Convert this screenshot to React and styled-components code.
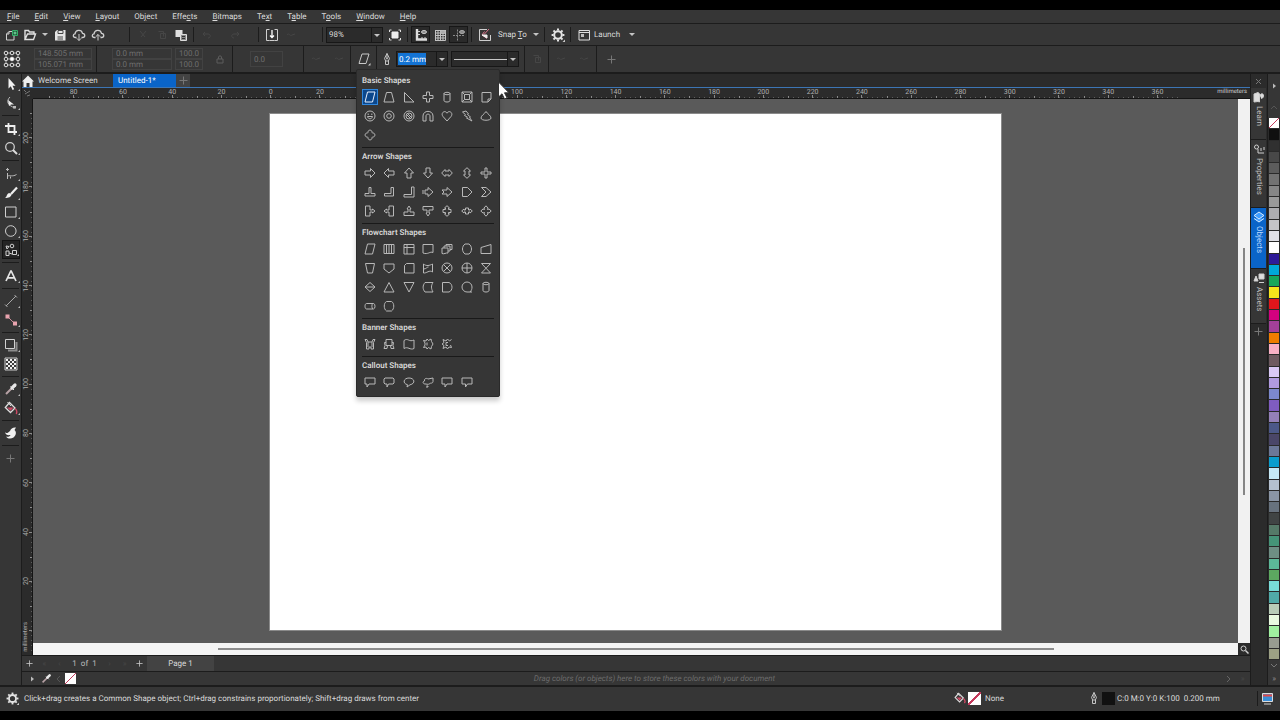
import React from "react";
import styled, { createGlobalStyle, css } from "styled-components";

const c = {
  bar: "#363636",
  dark: "#2b2b2b",
  line: "#1c1c1c",
  text: "#dadada",
  dim: "#6e6e6e",
  faint: "#464646",
  blue: "#0a64c8",
};

const Global = createGlobalStyle`
  * { box-sizing: border-box; }
  html, body { margin: 0; background: #000; }
  body, button, input, select {
    font-family: Roboto, "Open Sans", sans-serif;
    font-size: 8px;
    line-height: 11px;
    color: ${c.text};
    text-rendering: geometricPrecision;
  }
  button, input, select { margin: 0; padding: 0; border: 0; background: none; border-radius: 0; outline: 0; }
  a { color: inherit; text-decoration: none; }
`;

const Window = styled.div`
  min-height: 100vh;
  padding: 10px 0 9px;
  display: flex;
  flex-direction: column;
  background: #000;
  position: relative;
`;

/* ---------- icons ---------- */
const Svg = styled.svg`
  width: ${(p) => p.$size}px;
  height: ${(p) => p.$size}px;
  flex: none;
  display: block;
  fill: none;
  stroke: ${(p) => p.$color || "#cfcfcf"};
  stroke-width: 1;
`;
const Icon = ({ size = 14, color, box, children }) => (
  <Svg $size={size} $color={color} viewBox={`0 0 ${box || size} ${box || size}`} aria-hidden="true">
    {children}
  </Svg>
);
const Gear = ({ size = 14 }) => (
  <Icon size={size} box={14}>
    <circle cx="7" cy="7" r="3.8" strokeWidth="2" stroke="#e4e4e4" />
    {[0, 45, 90, 135, 180, 225, 270, 315].map((a) => (
      <path key={a} d="M7 .6v2" strokeWidth="2" stroke="#e4e4e4" transform={`rotate(${a} 7 7)`} />
    ))}
    <path d="M14 11.5V14h-2.5z" fill="#ccc" stroke="none" />
  </Icon>
);
const Plus = ({ color = "#777", size = 9 }) => (
  <Icon size={size} box={9} color={color}><path d="M4.5 .5v8M.5 4.5h8" /></Icon>
);
const Pen = () => (
  <Icon size={12} color="#c4c4c4">
    <path d="M6 .5L3.5 5.5l1.2 2.5h2.600L8.5 5.5zM6 .5v5M4.5 8v3.500h3V8" />
    <circle cx="6" cy="5.5" r=".6" />
  </Icon>
);
const Bucket = ({ size = 14 }) => (
  <Icon size={size} box={14}>
    <path d="M5.5 1.5L11 7l-4.5 4.500L1.300 6.500z" stroke="#dedede" strokeWidth="1.300" />
    <path d="M3 6.500h6.500L6.500 9.800z" fill="#d14a66" stroke="none" />
    <path d="M3.500 1l3.500 4" stroke="#dedede" />
    <path d="M11 7.500c1.800 1.500 2.200 4 1.200 5.500" stroke="#d14a66" strokeWidth="1.500" />
  </Icon>
);
const Dropper = ({ size = 14 }) => (
  <Icon size={size} box={14}>
    <path d="M2 12L8 6" stroke="#b8a2a6" strokeWidth="2" />
    <path d="M8 6l3-3" stroke="#e8e8e8" strokeWidth="3.200" strokeLinecap="round" />
    <path d="M6.5 4.500l3.500 3.500" stroke="#e8e8e8" />
  </Icon>
);
const Caret = styled.span`
  width: 0;
  height: 0;
  border: 3px solid transparent;
  border-top-color: #c4c4c4;
  border-bottom: 0;
  flex: none;
`;

/* ---------- menu ---------- */
const MenuBar = styled.nav`
  height: 14px;
  padding-left: 7px;
  display: flex;
  align-items: center;
  gap: 15px;
  background: ${c.bar};
  border-bottom: 1px solid ${c.line};
  u { text-decoration-thickness: 1px; text-underline-offset: 1px; }
`;
const MenuLink = styled.a`
  color: #dcdcdc;
`;
const menus = [
  ["", "F", "ile"], ["", "E", "dit"], ["", "V", "iew"], ["", "L", "ayout"], ["Ob", "j", "ect"],
  ["Effe", "c", "ts"], ["", "B", "itmaps"], ["Te", "x", "t"], ["T", "a", "ble"], ["T", "o", "ols"],
  ["", "W", "indow"], ["", "H", "elp"],
];

/* ---------- standard toolbar ---------- */
const Toolbar = styled.div`
  height: 22px;
  padding-left: 1px;
  display: flex;
  align-items: center;
  background: ${c.bar};
  border-bottom: 1px solid ${c.line};
`;
const ToolButton = styled.button`
  width: ${(p) => p.$w || 19}px;
  height: 17px;
  flex: none;
  display: flex;
  align-items: center;
  justify-content: center;
  ${(p) => p.$on && css`background: #2a2a2a; border: 1px solid #171717;`}
`;
const Sep = styled.span`
  width: 1px;
  height: 15px;
  margin: 0 3px;
  flex: none;
  background: ${c.line};
`;
const Select = styled.select`
  appearance: none;
  height: 16px;
  background: ${c.dark};
  border: 1px solid #171717;
`;
const SelectBox = styled.span`
  position: relative;
  display: flex;
  flex: none;
  width: ${(p) => p.$w}px;
  margin: ${(p) => p.$m || "0"};
  ${Select} { width: 100%; padding-left: 2px; }
  ${Caret} { position: absolute; right: 3px; top: 7px; pointer-events: none; }
  &::after { content: ""; position: absolute; right: 11px; top: 1px; bottom: 1px; width: 1px; background: #171717; }
`;
const StyleSelect = styled(Select)`
  background: linear-gradient(#c8c8c8, #c8c8c8) 2px center / 53px 1px no-repeat ${c.dark};
`;
const TextButton = styled.button`
  width: ${(p) => p.$w}px;
  flex: none;
  display: flex;
  align-items: center;
  justify-content: space-between;
  padding: 0 2px 0 ${(p) => p.$l}px;
  white-space: nowrap;
`;

const Faint = ({ kind }) => (
  <Icon size={12} color={c.faint}>
    {kind === "cut" && <path d="M3 2l5 6M9 2L4 8" />}
    {kind === "copy" && <path d="M2.500 2.500h5v5M4.500 4.500h5v5h-5z" />}
    {kind === "undo" && <path d="M2 5l2-2M2 5l2 2M2 5h5c3 0 3 4 0 4" />}
    {kind === "redo" && <path d="M10 5L8 3M10 5L8 7M10 5H5c-3 0-3 4 0 4" />}
    {kind === "dash" && <path d="M2 6c2-3 3 2 5 0l3-1" />}
  </Icon>
);

const Standard = () => (
  <Toolbar role="toolbar" aria-label="Standard">
    <ToolButton aria-label="New">
      <Icon><path d="M8 3.500H5L2.500 6v6h7.500V7" /><path d="M5 3.500V6H2.500" /><path d="M8.500 2.500h5v5h-5z" stroke="#35b06a" fill="#1c5c39" /><path d="M11 3.500v3M9.500 5h3" stroke="#7fe0a8" /></Icon>
    </ToolButton>
    <ToolButton aria-label="Open">
      <Icon><path d="M2 11.500V2.500h3.500l1 1.500h4.500v2M2 11.500l2.500-5.500h8l-2 5.500z" strokeWidth="1.400" stroke="#e0e0e0" /></Icon>
    </ToolButton>
    <ToolButton $w={11} aria-label="Recent files"><Caret /></ToolButton>
    <ToolButton aria-label="Save">
      <Icon><path d="M2 4l2-2h8.500v10.500H2z" fill="#e4e4e4" stroke="none" /><path d="M5 2.500h5v3H5z" fill="#e4e4e4" stroke="#444" /><path d="M4.500 9h5.500M4.500 11h5.500" stroke="#444" /></Icon>
    </ToolButton>
    <ToolButton aria-label="Open from cloud">
      <Icon><path d="M4.500 9.500H3.500C.5 9.500.8 6 3 5.800 3.500 1.500 9.500 1 10.500 5.300 13.500 5.500 13.500 9.500 10.500 9.500h-1" strokeWidth="1.300" /><path d="M7 6v6.500M4.800 10.300L7 12.500l2.200-2.200" /></Icon>
    </ToolButton>
    <ToolButton aria-label="Save to cloud">
      <Icon><path d="M4.500 9.500H3.500C.5 9.500.8 6 3 5.800 3.500 1.500 9.500 1 10.500 5.300 13.500 5.500 13.500 9.500 10.500 9.500h-1" strokeWidth="1.300" /><path d="M7 12.500V6.500M4.800 8.700L7 6.500l2.200 2.200" /></Icon>
    </ToolButton>
    <ToolButton disabled aria-label="Print"><Faint /></ToolButton>
    <Sep />
    <ToolButton disabled aria-label="Cut"><Faint kind="cut" /></ToolButton>
    <ToolButton disabled aria-label="Copy"><Faint kind="copy" /></ToolButton>
    <ToolButton aria-label="Paste">
      <Icon><path d="M1.500 2h7v7h-7z" fill="#e0e0e0" stroke="none" /><path d="M6.500 6.500h6v6h-6z" fill="#8a8a8a" stroke="#ddd" /><path d="M8 8.500h3M8 10.500h3" stroke="#333" /></Icon>
    </ToolButton>
    <Sep />
    <ToolButton disabled aria-label="Undo"><Faint kind="undo" /></ToolButton>
    <ToolButton $w={9} disabled aria-label="Undo list"><Faint /></ToolButton>
    <ToolButton disabled aria-label="Redo"><Faint kind="redo" /></ToolButton>
    <ToolButton $w={11} disabled aria-label="Redo list"><Faint /></ToolButton>
    <Sep />
    <ToolButton aria-label="Import">
      <Icon><path d="M4.500 1.500h-3v11h3M9.500 1.500h3v11h-3M4.500 12.500h5" /><path d="M7 2v7.500M5 7.500l2 2 2-2" stroke="#fff" strokeWidth="1.300" /></Icon>
    </ToolButton>
    <ToolButton disabled aria-label="Export"><Faint kind="dash" /></ToolButton>
    <ToolButton disabled aria-label="Publish"><Faint /></ToolButton>
    <Sep />
    <SelectBox $w={57} $m="0 2px 0 0">
      <Select aria-label="Zoom level" defaultValue="98%"><option>98%</option></Select>
      <Caret />
    </SelectBox>
    <ToolButton aria-label="Full screen preview">
      <Icon><path d="M4 4h6v6H4z" fill="#eee" stroke="#eee" /><path d="M1.500 4V2h2M10.500 2h2v2M12.500 10v2h-2M3.500 12h-2v-2" stroke="#ddd" /></Icon>
    </ToolButton>
    <Sep />
    <ToolButton $on aria-label="Show rulers">
      <Icon><path d="M3 1v10.500H13" strokeWidth="2.400" stroke="#ddd" /><path d="M4 3.500h2M4 6.500h2M8 11V9M11 11V9" /><ellipse cx="10" cy="4" rx="2.500" ry="1.500" fill="#888" /></Icon>
    </ToolButton>
    <ToolButton aria-label="Show grid">
      <Icon><path d="M2 2.500h10.500M2 5h10.500M2 7.500h10.500M2 10h10.500M2 12.500h10.500M2.500 2v10.500M5 2v10.500M7.500 2v10.500M10 2v10.500M12.500 2v10.500" stroke="#c2c2c2" /><ellipse cx="10" cy="4" rx="2.500" ry="1.500" fill="#aaa" stroke="#bbb" /></Icon>
    </ToolButton>
    <ToolButton $on aria-label="Show guidelines">
      <Icon color="#8a8a8a"><path d="M5.500 1.500v11M1 7.500h12" strokeDasharray="2 1" /><ellipse cx="10" cy="4" rx="2.500" ry="1.500" fill="#888" stroke="#aaa" /></Icon>
    </ToolButton>
    <Sep />
    <ToolButton aria-label="Snap off">
      <Icon><path d="M12.500 7v5.500H1.500v-11H9" /><path d="M11 1L6 6.500M6.500 3.500L4 7l5 3.500" stroke="#d9738a" /><path d="M4 7h5v3z" fill="#eee" stroke="#eee" /></Icon>
    </ToolButton>
    <TextButton $w={47} $l={4}><span>Snap <u>T</u>o</span><Caret /></TextButton>
    <Sep />
    <ToolButton aria-label="Options"><Gear /></ToolButton>
    <Sep />
    <ToolButton aria-label="Application launcher">
      <Icon><path d="M2 2.500h10.500v9.500H2zM2 4.500h10.500" stroke="#ddd" /><path d="M4 6h3v3H4z" fill="#bbb" stroke="none" /></Icon>
    </ToolButton>
    <TextButton $w={44} $l={1}><span>Launch</span><Caret /></TextButton>
  </Toolbar>
);

/* ---------- property bar ---------- */
const PropertyBar = styled.div`
  height: 28px;
  padding-left: 3px;
  display: flex;
  align-items: center;
  background: ${c.bar};
  border-bottom: 2px solid ${c.line};
`;
const TallSep = styled(Sep)`
  height: 26px;
  margin: 0;
`;
const Stack = styled.div`
  display: flex;
  flex-direction: column;
  margin: 0 ${(p) => p.$r || 3}px 0 ${(p) => p.$l || 0}px;
`;
const Field = styled.input`
  width: ${(p) => p.$w}px;
  height: 11px;
  padding: 0 3px;
  color: ${c.dim};
  border: 1px solid #424242;
  ${(p) => p.$tall && css`height: 16px;`}
`;
const Slot = styled.span`
  width: ${(p) => p.$w}px;
  flex: none;
  display: flex;
  align-items: center;
  justify-content: center;
`;
const PickerAnchor = styled.div`
  position: relative;
  width: 25px;
  display: flex;
  justify-content: center;
`;
const Combo = styled.div`
  width: 52px;
  height: 16px;
  flex: none;
  display: flex;
  align-items: center;
  justify-content: space-between;
  padding-left: 1px;
  background: ${c.dark};
  border: 1px solid #171717;
  input { width: 28px; height: 12px; padding-left: 1px; background: #1373d4; color: #fff; }
  button { width: 11px; height: 14px; display: flex; align-items: center; justify-content: center; border-left: 1px solid #171717; }
`;

/* ---------- shape picker ---------- */
const Popup = styled.div`
  position: absolute;
  z-index: 5;
  left: 5px;
  top: 18px;
  width: 144px;
  padding: 2px 3px;
  background: ${c.bar};
  border: 1px solid #2a2a2a;
  border-radius: 2px;
  box-shadow: 0 4px 5px rgba(0, 0, 0, 0.2);
`;
const Group = styled.section`
  padding-bottom: 2px;
  & + &::before { content: ""; display: block; height: 1px; margin: 0 2px; background: #191919; }
`;
const GroupTitle = styled.h2`
  margin: 0;
  padding-left: 2px;
  height: 16px;
  font-size: 8px;
  line-height: 17px;
  font-weight: 600;
  color: #d8d8d8;
`;
const ShapeGrid = styled.div`
  display: grid;
  grid-template-columns: repeat(7, 1fr);
  grid-auto-rows: 19px;
  place-items: center;
`;
const ShapeButton = styled.button`
  width: 16px;
  height: 16px;
  display: flex;
  align-items: center;
  justify-content: center;
  ${(p) => p.$on && css`background: #0b478c; outline: 1px solid #2f86dc; outline-offset: -1px;`}
`;

const groups = [
  ["Basic Shapes", [
    ["Parallelogram", "M3.500 1h7.500l-2.500 10H1z"],
    ["Trapezoid", "M3.500 1.500h5L11 11H1z"],
    ["Right triangle", "M1.500 1.500L11 11H1.500z"],
    ["Cross", "M4.500 1h3v3.500H11v3H7.500V11h-3V7.500H1v-3h3.500z"],
    ["Cylinder", "M3 2.500v7c0 2 6 2 6 0v-7M3 2.500c0-1.600 6-1.600 6 0s-6 1.600-6 0"],
    ["Frame", "M1 1h10v10H1zM3.500 3.500h5v5h-5zM1 1l2.500 2.500M11 1L8.500 3.500M1 11l2.500-2.500M11 11L8.500 8.500"],
    ["Folded corner", "M2 1.500h9V8l-3 3H2zM11 8H8v3"],
    ["Smiley", "M11 6A5 5 0 1 1 1 6a5 5 0 0 1 10 0zM3.500 6.500c.5 3 4.500 3 5 0zM3.500 4.200h1.500M7 4.200h1.500"],
    ["Donut", "M11 6A5 5 0 1 1 1 6a5 5 0 0 1 10 0zM8.300 6a2.300 2.300 0 1 1-4.600 0 2.300 2.300 0 0 1 4.600 0z"],
    ["No symbol", "M11 6A5 5 0 1 1 1 6a5 5 0 0 1 10 0zM9 6a3 3 0 1 1-6 0 3 3 0 0 1 6 0zM3 4l5 5M4 3l5 5"],
    ["Arch", "M1 11V6C1-.2 11-.2 11 6v5H8V6C8 3.500 4 3.500 4 6v5z"],
    ["Heart", "M6 11L2 6.500C-.8 3 4-.5 6 3.200 8-.5 12.800 3 10 6.500z"],
    ["Lightning", "M1.500 2L5 1l2.500 3-1 .5L9.500 7l-1 .5L11 11 5.500 8l1-.8L3.500 5.500l1-.8z"],
    ["Teardrop", "M6 1.500C7.500 4 11 5.500 11 8c0 3-10 3-10 0C1 5.500 4.500 4 6 1.500z"],
    ["Plaque", "M4 3C4 .5 8 .5 8 3c0 1 .5 1 1 1 2.500 0 2.500 4 0 4-.5 0-1 0-1 1 0 2.500-4 2.500-4 0 0-1-.5-1-1-1C.5 8 .5 4 3 4c.5 0 1 0 1-1z"],
  ]],
  ["Arrow Shapes", [
    ["Right arrow", "M1 4h5.500V1.500L11 6l-4.500 4.500V8H1z"],
    ["Left arrow", "M11 4H5.500V1.500L1 6l4.500 4.500V8H11z"],
    ["Up arrow", "M4 11V6H1.500L6 1l4.500 5H8v5z"],
    ["Down arrow", "M4 1v5H1.500L6 11l4.500-5H8V1z"],
    ["Left-right arrow", "M.7 6L4 2.500V4h4V2.500L11.300 6 8 9.500V8H4v1.500z"],
    ["Up-down arrow", "M6 .7L9.500 4H8v4h1.500L6 11.300 2.500 8H4V4H2.500z"],
    ["Four-way arrow", "M5 1h2v4h4v2H7v4H5V7H1V5h4z"],
    ["Three-way arrow", "M5 1.500h2v6h4v2.500H1V7.500h4z"],
    ["Bent arrow", "M8 1.500h2.500v8.500H1.500V7.500H8z"],
    ["Corner arrow", "M8.500 1h2.500v10H1V8.500h7.500z"],
    ["Striped arrow", "M1 4v4M3 4h3V1.500L11 6l-5 4.500V8H3z"],
    ["Notched arrow", "M1 4h5V1.500L11 6l-5 4.500V8H1l2-2z"],
    ["Pentagon arrow", "M1.500 1.500h5L11 6l-4.500 4.500h-5z"],
    ["Chevron", "M1.500 1.500h4.500L11 6l-5 4.500H1.500L6 6z"],
    ["Right callout arrow", "M1.500 1H6v4h2.500V4L11 6 8.500 8V7H6v4H1.500z"],
    ["Left callout arrow", "M10.500 1H6v4H3.500V4L1 6l2.500 2V7H6v4h4.500z"],
    ["Up callout arrow", "M1 10.500V7h4V4H4l2-3 2 3H7v3h4v3.500z"],
    ["Down callout arrow", "M1 1.500V5h4v3H4l2 3 2-3H7V5h4V1.500z"],
    ["Up-down callout", "M6 .7L8.500 3H7.500v1.500H10v3H7.500V9h1L6 11.300 3.500 9h1V7.500H2v-3h2.500V3h-1z"],
    ["Left-right callout", "M.7 6L3 4v1h1.500V3h3v2H9V4l2.300 2L9 8V7H7.500v2h-3V7H3v1z"],
    ["Quad callout", "M6 .8L8 3l-.5 1.500L9 4l2.200 2L9 8l-1.500-.5L8 9l-2 2.200L4 9l.5-1.500L3 8 .8 6 3 4l1.500.5L4 3z"],
  ]],
  ["Flowchart Shapes", [
    ["Data", "M3.500 1h7.500l-2.500 10H1z"],
    ["Predefined process", "M1 1.500h10v9H1zM3.500 1.500v9M6 1.500v9M8.500 1.500v9"],
    ["Internal storage", "M1 1.500h10v9.500H1zM4 1.500v9.500M1 4.500h10"],
    ["Document", "M1 1.500h10v8C8 8 6 12 1 10z"],
    ["Multidocument", "M1 5h6v5c-2-.5-4 1.500-6 .5zM3 5V3h6v5H7M5 3V1.500h6V6.500H9"],
    ["Preparation", "M4 1h4c1.500 1 2.500 3 2.500 5S9.500 10 8 11H4C2.500 10 1.500 8 1.500 6S2.500 2 4 1z"],
    ["Manual input", "M1 4.500L11 1.500v9H1z"],
    ["Manual operation", "M1.500 1.500h9L8.500 11h-5z"],
    ["Off-page connector", "M1 2h10v5l-5 4-5-4z"],
    ["Card", "M3.500 1.500H11V11H1.500V3.500z"],
    ["Punched tape", "M1.500 2c3 2.500 6 1.500 9 0v8c-3-2.500-6 1.500-9 1zM1.500 7c3 0 3-2 5-2"],
    ["Summing junction", "M11 6A5 5 0 1 1 1 6a5 5 0 0 1 10 0zM2.500 2.500l7 7M9.500 2.500l-7 7"],
    ["Or", "M11 6A5 5 0 1 1 1 6a5 5 0 0 1 10 0zM6 1v10M1 6h10"],
    ["Collate", "M1.500 1.500h9l-9 9.500h9z"],
    ["Sort", "M6 1.500L11 6l-5 4.500L1 6zM1 6h10"],
    ["Extract", "M6 1.500L11 11H1z"],
    ["Merge", "M1 1.500h10L6 11z"],
    ["Stored data", "M3 1.500h8c-2 3-2 6 0 9.500H3C.5 8 .5 4.500 3 1.500z"],
    ["Delay", "M1.500 1.500H8c4 1.500 4 8 0 9.500H1.500z"],
    ["Sequential access", "M11 11H6A5 5 0 1 1 11 6c0 2-.5 3.500-2 5"],
    ["Magnetic disk", "M3 2.500v7c0 2 6 2 6 0v-7M3 2.500c0-1.600 6-1.600 6 0s-6 1.600-6 0"],
    ["Direct access", "M2.500 3.500h7c2 0 2 5.500 0 5.500h-7c-2 0-2-5.500 0-5.500zM9 3.500c-1.500 0-1.500 5.500 0 5.500"],
    ["Display", "M3.500 1.500h5C11.500 3 11.500 9 8.500 11h-5C.5 9 .5 3 3.500 1.500z"],
  ]],
  ["Banner Shapes", [
    ["Ribbon up", "M1 1.500h2L4 4h4l1-2.500h2L9.500 4.500V11H7V9H5v2H2.500V4.500zM4 4v5M8 4v5"],
    ["Ribbon down", "M3 1.500h6v6H3zM3 4.500H1.500l.5 3-1 3h3l.5-3M9 4.500h1.500l-.5 3 1 3H8l-.5-3"],
    ["Wave", "M1 2.500c4-3 5 2 10-.5v8.500c-4 2-6-2.500-10 0z"],
    ["Star banner", "M1.500 2.500l2.500.5 1-2 1.500 1.500L9 1l.5 2.500L11 6 9.500 8.500 9 11 6.500 9.500 5 11 4 9l-2.500.5L3 7V5zM5 4.500v3"],
    ["Burst banner", "M10.500 1.500L8.500 3 6.500 1 5 3 2 1.500 3 4.500 1 6l2 1.500-1 3 3-1.500L6.500 11 8 9l2.500.5-1-2.500M7 4.500H5v3h2"],
  ]],
  ["Callout Shapes", [
    ["Rectangular callout", "M1 2h10v6H5L3 11V8H1z"],
    ["Rounded callout", "M2 2h8l1 1v4l-1 1H5.500L4 11V8H2L1 7V3z"],
    ["Oval callout", "M4.500 8.700C-.8 7.500.5 2 6 2s7 5.500 1 6.800L4 11z"],
    ["Cloud callout", "M4 8C1 8.500 0 5.500 2.500 5 2 2 5 2 6 3l5-1v3.500C11 6.500 10 7.500 8.500 7 8 8.500 5 8.500 4 8zM4.500 10h1.500v1H4"],
    ["Line callout", "M1 2h10v6H6L4 11V8H1z"],
    ["Bent line callout", "M1 2h10v6H6.500L4.500 11V8H1z"],
  ]],
];

const ShapePicker = () => (
  <Popup role="menu" aria-label="Common shapes">
    {groups.map(([title, shapes]) => (
      <Group key={title}>
        <GroupTitle>{title}</GroupTitle>
        <ShapeGrid>
          {shapes.map(([name, d]) => {
            const on = title === "Basic Shapes" && name === "Parallelogram";
            return (
              <ShapeButton key={name} aria-label={name} $on={on}>
                <Icon size={12} color={on ? "#e6f0ff" : "#b8b8b8"}><path d={d} /></Icon>
              </ShapeButton>
            );
          })}
        </ShapeGrid>
      </Group>
    ))}
  </Popup>
);

const Properties = () => (
  <PropertyBar role="toolbar" aria-label="Property bar">
    <Icon size={18}>
      <path d="M4 3h10M4 9h3M11 9h3M4 15h10M3 4v10M15 4v10" stroke="#999" />
      {[3, 9, 15].map((x) => [3, 9, 15].map((y) => (
        <circle key={x + "-" + y} cx={x} cy={y} r="1.800" fill={x === 9 && y === 9 ? "#fff" : c.bar} stroke="#e4e4e4" />
      )))}
    </Icon>
    <Stack $l={13} $r={4}>
      <Field $w={58} disabled aria-label="X position" defaultValue="148.505 mm" />
      <Field $w={58} disabled aria-label="Y position" defaultValue="105.071 mm" />
    </Stack>
    <TallSep />
    <Stack $l={15}>
      <Field $w={60} disabled aria-label="Width" defaultValue="0.0 mm" />
      <Field $w={60} disabled aria-label="Height" defaultValue="0.0 mm" />
    </Stack>
    <Stack $r={5}>
      <Field $w={28} disabled aria-label="Scale X" defaultValue="100.0" />
      <Field $w={28} disabled aria-label="Scale Y" defaultValue="100.0" />
    </Stack>
    <Slot $w={24}><Icon size={10} color="#5c5c5c"><path d="M2 5h6v4H2zM3.500 5V3c0-1.500 3-1.500 3 0v2" /></Icon></Slot>
    <TallSep />
    <Stack $l={17} $r={20}><Field $tall $w={33} disabled aria-label="Rotation" defaultValue="0.0" /></Stack>
    <TallSep />
    <Slot $w={23}><Faint kind="dash" /></Slot>
    <Slot $w={23}><Faint kind="dash" /></Slot>
    <TallSep />
    <PickerAnchor>
      <ToolButton aria-label="Common shapes" aria-expanded="true">
        <Icon><path d="M5 2h7l-3 9.500H2z" stroke="#c8c8c8" /><path d="M13.500 11v2.500H11z" fill="#ccc" stroke="none" /></Icon>
      </ToolButton>
      <ShapePicker />
    </PickerAnchor>
    <TallSep />
    <Slot $w={19}><Pen /></Slot>
    <Combo>
      <input aria-label="Outline width" defaultValue="0.2 mm" />
      <button aria-label="Outline width list"><Caret /></button>
    </Combo>
    <SelectBox $w={68} $m="0 5px 0 3px">
      <StyleSelect aria-label="Line style"><option value="solid" aria-label="Solid" /></StyleSelect>
      <Caret />
    </SelectBox>
    <TallSep />
    <Slot $w={23}><Faint kind="copy" /></Slot>
    <TallSep />
    <Slot $w={23}><Faint kind="dash" /></Slot>
    <Slot $w={24}><Faint kind="dash" /></Slot>
    <TallSep />
    <ToolButton $w={29} aria-label="Add tool"><Plus /></ToolButton>
  </PropertyBar>
);

/* ---------- body ---------- */
const Body = styled.div`
  flex: 1;
  display: flex;
  background: ${c.bar};
`;
const Toolbox = styled.div`
  width: 22px;
  flex: none;
  display: flex;
  flex-direction: column;
  align-items: center;
  border-right: 1px solid ${c.line};
`;
const ToolItem = styled.button`
  position: relative;
  width: 18px;
  height: 19px;
  display: flex;
  align-items: center;
  justify-content: center;
  ${(p) => p.$on && css`background: #242424; border: 1px solid #141414;`}
  ${(p) => p.$more && css`
    &::after { content: ""; position: absolute; right: 0; bottom: 2px; border: 1px solid #bbb; border-top-color: transparent; border-left-color: transparent; }
  `}
`;
const ToolRule = styled.hr`
  width: 17px;
  height: 1px;
  margin: 3px 0 ${(p) => (p.$tight ? 2 : 3)}px;
  border: 0;
  flex: none;
  background: ${c.line};
`;
const tools = [
  ["Pick", <path d="M4.500 1v10.500l2.300-2.200 1.700 3.700 1.700-.8-1.700-3.500h3z" fill="#f2f2f2" stroke="none" />, 1],
  ["Shape", <><path d="M6 1C2 5 3 9 11 12" stroke="#bbb" /><path d="M4 4l1 6 2-1.500h3z" fill="#eee" stroke="none" /><path d="M9 10h3v2.500H9z" fill="#bbb" stroke="none" /></>, 1],
  "rule",
  ["Crop", <path d="M4.500 1v9H13M1 4h9.500v9" strokeWidth="1.800" stroke="#eee" />, 1],
  ["Zoom", <><circle cx="6" cy="6" r="4.300" stroke="#ccc" strokeWidth="1.300" /><path d="M9 9l4 4" strokeWidth="2" stroke="#ddd" /></>, 1],
  "rule",
  ["Freehand", <path d="M3.500 1v3M2 2.500h3M3.500 6v6M3.500 9c3-1 5 1 9-1.500M6.500 9.500v2" stroke="#bbb" />, 1],
  ["Artistic media", <><path d="M13 1.500L7 8" strokeWidth="2.200" stroke="#eee" /><path d="M7.500 8c0 3-3 4-6.500 4 2-1 1.500-4 4-5z" fill="#eee" stroke="none" /></>, 1],
  ["Rectangle", <path d="M1.500 2h10.500v10H1.500z" />, 1],
  ["Ellipse", <circle cx="6.800" cy="7" r="5.300" />, 1],
  ["Common shapes", <><circle cx="8" cy="3" r="1.800" /><path d="M2 3l3 .5-2 2.500zM2 8h3v4.500H2zM8.500 7.500h4v4h-4z" /><path d="M5 10l3 1" /></>, 1, 1],
  "rule",
  ["Text", <path d="M2 12L6.800 2h.4L12 12M3.800 8.800h6.400" strokeWidth="1.700" stroke="#e6e6e6" />, 1],
  "tight",
  ["Dimension", <path d="M2 12L12 2M1 10.500l2.500 2.500M10.500 1l2.500 2.500" stroke="#a8a8a8" />, 1],
  ["Connector", <><path d="M3 3l8 8" stroke="#c98d98" /><path d="M1.500 1.500h4v4h-4zM9 8.500h4v4H9z" fill="#e8a3ae" stroke="none" /></>, 1],
  "tight",
  ["Drop shadow", <><path d="M4 12.500h8.500V4" strokeWidth="2" stroke="#8c8c8c" /><path d="M1.500 1.500h9v9h-9z" fill="#363636" stroke="#d0d0d0" /></>, 1],
  ["Transparency", <><path d="M1 1h12v12H1z" fill="#3a3a3a" stroke="#ccc" />{[0, 1, 2, 3, 4].map((r) => [0, 1, 2, 3, 4].map((k) => (r + k) % 2 === 0 && <rect key={r + "-" + k} x={2 + k * 2} y={2 + r * 2} width="2" height="2" fill="#f0f0f0" stroke="none" />))}</>],
  "tight",
  ["Color eyedropper", "dropper", 1],
  ["Interactive fill", "bucket", 1],
  "tight",
  ["Smart tool", <path d="M1 6c1 2 3 1 5-1 1-2.500 3-4 6-3.500L10.500 4c2 1.500 2 5-1 7.500-3 2-6.500 1-7.500-1 2 .8 4 0 4.500-1.500C4 9.500 1.500 9 1 6z" fill="#f0f0f0" stroke="none" />],
  "rule",
];
const Tools = () => (
  <Toolbox role="toolbar" aria-label="Toolbox">
    {tools.map((t, i) =>
      typeof t === "string" ? <ToolRule key={i} $tight={t === "tight"} /> : (
        <ToolItem key={t[0]} aria-label={t[0]} $more={t[2]} $on={t[3]}>
          {t[1] === "dropper" ? <Dropper /> : t[1] === "bucket" ? <Bucket /> : <Icon>{t[1]}</Icon>}
        </ToolItem>
      )
    )}
    <ToolItem aria-label="Customize toolbox"><Plus /></ToolItem>
  </Toolbox>
);

const Center = styled.div`
  flex: 1;
  min-width: 0;
  display: flex;
  flex-direction: column;
`;
const Tabs = styled.div`
  height: 14px;
  display: flex;
  background: ${c.dark};
  border-bottom: 1px solid #3c75b4;
`;
const Tab = styled.button`
  display: flex;
  align-items: center;
  justify-content: ${(p) => (p.$l === undefined ? "center" : "flex-start")};
  width: ${(p) => p.$w}px;
  padding-left: ${(p) => p.$l || 0}px;
  background: ${(p) => (p.$on ? c.blue : p.$light ? "#434343" : c.bar)};
  color: ${(p) => (p.$on ? "#fff" : c.text)};
  gap: 4px;
  white-space: nowrap;
`;
const Editor = styled.div`
  flex: 1;
  display: grid;
  grid-template-columns: 11px 1fr 12px;
  grid-template-rows: 11px 1fr 12px;
`;
const tick = "#8a8a8a";
const RulerTop = styled.div`
  grid-column: 2 / 4;
  display: flex;
  padding-left: 16px;
  background: ${c.dark};
  border-bottom: 1px solid #151515;
`;
const RulerCorner = styled.div`
  background: ${c.dark};
  display: flex;
  align-items: center;
  justify-content: center;
`;
const MarkX = styled.span`
  flex: 1;
  text-align: center;
  font-size: 7px;
  line-height: 8px;
  color: #b0b0b0;
  background:
    linear-gradient(${tick}, ${tick}) center bottom / 1px 3px no-repeat,
    linear-gradient(${tick}, ${tick}) left bottom / 1px 2px no-repeat,
    repeating-linear-gradient(to right, #5e5e5e 0 1px, transparent 1px 10%) left bottom / 100% 1px no-repeat;
`;
const UnitX = styled.span`
  width: 68px;
  padding-right: 3px;
  text-align: right;
  font-size: 6px;
  line-height: 8px;
  color: #d0d0d0;
`;
const RulerLeft = styled.div`
  grid-row: 2 / 4;
  display: flex;
  flex-direction: column;
  padding-top: 14px;
  background: ${c.dark};
  border-right: 1px solid #151515;
`;
const MarkY = styled.span`
  flex: 1;
  display: flex;
  align-items: center;
  justify-content: flex-start;
  font-size: 7px;
  line-height: 8px;
  color: #b0b0b0;
  background:
    linear-gradient(${tick}, ${tick}) right center / 3px 1px no-repeat,
    linear-gradient(${tick}, ${tick}) right top / 2px 1px no-repeat,
    repeating-linear-gradient(to bottom, #5e5e5e 0 1px, transparent 1px 10%) right top / 1px 100% no-repeat;
  span { writing-mode: vertical-rl; transform: rotate(180deg); }
`;
const UnitY = styled(MarkY)`
  flex: 0 0 49px;
  padding-top: 12px;
  font-size: 6px;
`;
const Workspace = styled.main`
  display: flex;
  justify-content: center;
  padding: 14px 0 12px;
  background: #5a5a5a;
`;
const Sheet = styled.div`
  width: 60.8%;
  background: #fff;
  border: 1px solid #8a8a8a;
`;
const ScrollY = styled.div`
  background: #f1f1f1;
  display: flex;
  flex-direction: column;
  align-items: center;
  &::before { content: ""; flex: 149; }
  &::after { content: ""; flex: 148; }
  span { flex: 247; width: 2px; background: #858585; }
`;
const ScrollX = styled.div`
  background: #f4f4f4;
  display: flex;
  align-items: center;
  &::before { content: ""; flex: 185; }
  &::after { content: ""; flex: 184; }
  span { flex: 836; height: 2px; background: #8c8c8c; }
`;
const Strip = styled.div`
  height: ${(p) => p.$h}px;
  padding-left: ${(p) => p.$l || 0}px;
  display: flex;
  align-items: center;
  border-top: 1px solid ${c.line};
`;
const NavButton = styled.button`
  width: ${(p) => p.$w || 15}px;
  flex: none;
  display: flex;
  justify-content: center;
  color: ${c.faint};
`;
const PageCount = styled.span`
  width: 35px;
  text-align: center;
  color: #bcbcbc;
`;
const PageTab = styled(Tab)`
  height: 15px;
  background: #434343;
`;
const Hint = styled.span`
  flex: 1;
  padding-left: 10px;
  text-align: center;
  font-style: italic;
  color: #6c6c6c;
`;

const Swatch = styled.button`
  display: block;
  width: ${(p) => p.$s}px;
  height: ${(p) => p.$s}px;
  flex: none;
  background: ${(p) => p.$color};
`;
const nocolor = "linear-gradient(135deg, transparent 46%, #c43a5c 46% 54%, transparent 54%), #fff";

const Dockers = styled.div`
  width: 17px;
  flex: none;
  padding-right: 1px;
  display: flex;
  flex-direction: column;
  background: ${c.dark};
  border-left: 1px solid ${c.line};
`;
const DockClose = styled.button`
  height: 14px;
  color: #8a8a8a;
  display: flex;
  align-items: center;
  justify-content: center;
`;
const DockTab = styled.button`
  height: ${(p) => p.$h}px;
  padding-top: 3px;
  display: flex;
  flex-direction: column;
  align-items: center;
  gap: 3px;
  background: ${(p) => (p.$on ? c.blue : c.bar)};
  border-bottom: 1px solid ${c.line};
  color: ${(p) => (p.$on ? "#b8d8ff" : "#bdbdbd")};
  span { writing-mode: vertical-rl; line-height: 12px; }
`;
const PaletteCol = styled.div`
  width: 13px;
  flex: none;
  display: flex;
  flex-direction: column;
  border-left: 1px solid ${c.line};
`;
const PaletteHead = styled.button`
  height: ${(p) => p.$h}px;
  display: flex;
  align-items: center;
  justify-content: center;
  color: #8a8a8a;
`;
const PaletteColor = styled.button`
  flex: 1;
  background: ${(p) => p.$color};
  border: solid #2a2a2a;
  border-width: 0 1px 1px;
`;
const palette = [
  "#101010", "#303030", "#484848", "#5c5c5c", "#727272", "#868686", "#9a9a9a", "#adadb0", "#c4c4c8", "#e0e0e6", "#ffffff",
  "#2e1a98", "#00a8d8", "#16a75a", "#f5e61c", "#e0161c", "#d3017f", "#a24099", "#ee7d00", "#f9b0c5", "#6e5a60",
  "#d9c8f5", "#b09ae0", "#7c88cc", "#7f5cc0", "#9480b8", "#4c5888", "#4a4668", "#6c7898", "#0a9dcd", "#c5e8f5",
  "#b4c0cf", "#8a95a5", "#67727e", "#404444", "#557a68", "#459478", "#6e8e84", "#5cb898", "#5ca860", "#78dcd8",
  "#50aaa8", "#b8ccb8", "#e8fae0", "#a0f0a0", "#989c90", "#9ca084",
];

/* ---------- status ---------- */
const Status = styled.footer`
  height: 26px;
  display: flex;
  align-items: center;
  padding: 0 6px 2px;
  background: ${c.bar};
  border-top: 2px solid ${c.line};
`;
const StatusText = styled.span`
  flex: 1;
  padding-left: 5px;
  white-space: nowrap;
`;
const StatusCell = styled.span`
  width: ${(p) => p.$w}px;
  flex: none;
  display: flex;
  align-items: center;
  gap: 2px;
  white-space: pre;
`;
const Cursor = styled.div`
  position: absolute;
  z-index: 9;
  left: 497px;
  top: 81px;
  pointer-events: none;
`;

const Chevron = ({ d, color = "#777" }) => <Icon size={8} color={color}><path d={d} /></Icon>;
const rangeX = Array.from({ length: 23 }, (_, i) => Math.abs(i * 20 - 80));
const rangeY = Array.from({ length: 10 }, (_, i) => 200 - i * 20);

export default function App() {
  return (
    <Window>
      <Global />
      <MenuBar aria-label="Main menu">
        {menus.map(([a, k, b]) => <MenuLink href="#" key={a + k + b}>{a}<u>{k}</u>{b}</MenuLink>)}
      </MenuBar>
      <Standard />
      <Properties />
      <Body>
        <Tools />
        <Center>
          <Tabs>
            <Tab $w={91} $l={0}>
              <Icon size={12}><path d="M0 6.500L6 .5l6 6h-1.500V12H7.500V8h-3v4H1.500V6.500z" fill="#eee" stroke="none" /></Icon>
              Welcome Screen
            </Tab>
            <Tab $w={63} $l={5} $on>Untitled-1*</Tab>
            <Tab $w={14} $light aria-label="New document"><Plus /></Tab>
          </Tabs>
          <Editor>
            <RulerCorner><Icon size={9} color="#777"><path d="M1 1l2 2M2 5l5-3M4 7l3-1" /></Icon></RulerCorner>
            <RulerTop>
              {rangeX.map((n, i) => <MarkX key={i}>{n}</MarkX>)}
              <UnitX>millimeters</UnitX>
            </RulerTop>
            <RulerLeft>
              {rangeY.map((n) => <MarkY key={n}><span>{n}</span></MarkY>)}
              <UnitY><span>millimeters</span></UnitY>
            </RulerLeft>
            <Workspace><Sheet /></Workspace>
            <ScrollY><span /></ScrollY>
            <ScrollX><span /></ScrollX>
            <RulerCorner><Icon size={10}><circle cx="4.500" cy="4.500" r="2.500" /><path d="M6.500 6.500l3 3" strokeWidth="1.500" /></Icon></RulerCorner>
          </Editor>
          <Strip $h={16}>
            <NavButton aria-label="Add page before"><Plus color="#ccc" size={7} /></NavButton>
            <NavButton disabled aria-label="First page">«</NavButton>
            <NavButton disabled aria-label="Previous page">‹</NavButton>
            <PageCount>1 &nbsp;of &nbsp;1</PageCount>
            <NavButton disabled aria-label="Next page">›</NavButton>
            <NavButton disabled aria-label="Last page">»</NavButton>
            <NavButton aria-label="Add page after"><Plus color="#ccc" size={7} /></NavButton>
            <PageTab $w={67}>Page 1</PageTab>
          </Strip>
          <Strip $h={14} $l={3}>
            <NavButton $w={14} aria-label="Palette menu"><Icon size={8}><path d="M3 1.500L6 4 3 6.500z" fill="#bbb" stroke="none" /></Icon></NavButton>
            <NavButton $w={14} aria-label="Pick color"><Dropper size={11} /></NavButton>
            <NavButton $w={12} disabled aria-label="Scroll left"><Chevron d="M5 1L2 4l3 3" color="#555" /></NavButton>
            <Swatch $s={11} $color={nocolor} aria-label="No color" />
            <Hint>Drag colors (or objects) here to store these colors with your document</Hint>
            <NavButton $w={12} disabled aria-label="Scroll right"><Chevron d="M2 1l3 3-3 3" color="#666" /></NavButton>
            <NavButton disabled aria-label="Expand">»</NavButton>
          </Strip>
        </Center>
        <Dockers>
          <DockClose aria-label="Close docker"><Icon size={7} color="#777"><path d="M1 1l5 5M6 1L1 6" /></Icon></DockClose>
          <DockTab $h={52}>
            <Icon size={12}><path d="M1 3l4-1.500 1.500 1.200V11L5 10.500 1 11zM7 5c0-3 4-3 3.500 0S8 7 8.500 8" fill="#ddd" /></Icon>
            <span>Learn</span>
          </DockTab>
          <DockTab $h={68}>
            <Icon size={12}><circle cx="3.500" cy="4" r="2" /><path d="M5 6v4h6M8 5v3M11 4v3" /></Icon>
            <span>Properties</span>
          </DockTab>
          <DockTab $h={61} $on>
            <Icon size={12} color="#d8ecff"><path d="M6 1l5 3.500L6 8 1 4.500zM1 7.500L6 11l5-3.500" fill="#3f9dff" /></Icon>
            <span>Objects</span>
          </DockTab>
          <DockTab $h={55}>
            <Icon size={12}><path d="M1 9h4l-2-5zM6 2h5v5H6zM6 10.500h5" fill="#ddd" /></Icon>
            <span>Assets</span>
          </DockTab>
          <PaletteHead $h={15} aria-label="Add docker"><Plus /></PaletteHead>
        </Dockers>
        <PaletteCol>
          <PaletteHead $h={24} aria-label="Palette options"><Icon size={8}><path d="M3 1.500L6 4 3 6.500z" fill="#bbb" stroke="none" /></Icon></PaletteHead>
          <PaletteHead $h={20} aria-label="Scroll up"><Chevron d="M1 5l3-3 3 3" color="#555" /></PaletteHead>
          <PaletteColor $color={nocolor} aria-label="No color" />
          {palette.map((p, i) => <PaletteColor key={i} $color={p} aria-label={"Color " + p} />)}
          <PaletteHead $h={11} aria-label="Scroll down"><Chevron d="M1 2l3 3 3-3" /></PaletteHead>
          <PaletteHead $h={14} aria-label="Expand palette">»</PaletteHead>
        </PaletteCol>
      </Body>
      <Status>
        <Gear size={13} />
        <StatusText>Click+drag creates a Common Shape object; Ctrl+drag constrains proportionately; Shift+drag draws from center</StatusText>
        <StatusCell $w={134}><Bucket size={12} /><Swatch $s={13} $color={nocolor} aria-label="Fill color" />&nbsp;None</StatusCell>
        <StatusCell $w={166}><Pen /><Swatch $s={13} $color="#111" aria-label="Outline color" />C:0 M:0 Y:0 K:100  0.200 mm</StatusCell>
        <Sep />
        <Icon size={13}><path d="M1.500 1.500h10v8h-10z" fill="#3a8fd8" stroke="#ddd" /><path d="M2 3.500h9" stroke="#e04848" strokeWidth="2" /><path d="M3 12h7" /></Icon>
      </Status>
      <Cursor>
        <Svg $size={20} viewBox="0 0 20 20"><path d="M1.500 1v15l3.500-3.200 2.500 5.200 2.500-1.200-2.500-5H12z" fill="#fff" stroke="#333" /></Svg>
      </Cursor>
    </Window>
  );
}
